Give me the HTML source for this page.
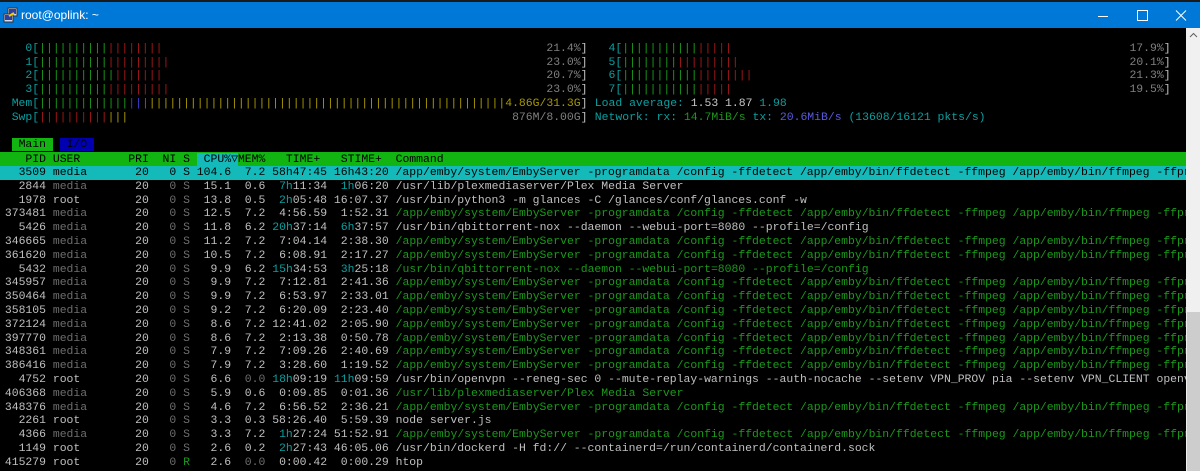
<!DOCTYPE html>
<html><head><meta charset="utf-8">
<style>
*{margin:0;padding:0}
body{width:1200px;height:471px;overflow:hidden;background:#0c0c0c;position:relative;font-family:"Liberation Mono",monospace;font-size:11.43px;color:#c0c0c0}
#top{position:absolute;left:0;top:0;width:1200px;height:2px;background:#1a1a1a}
#tb{position:absolute;left:0;top:2px;width:1200px;height:26px;background:#0078d7;color:#fff;font-family:"Liberation Sans",sans-serif;font-size:12px}
#tb .t{position:absolute;left:21px;top:6px}
#term{position:absolute;left:0;top:28px;width:1186px;height:443px;overflow:hidden;background:#000}
.l{position:absolute;left:-2px;height:13.8px;line-height:13.8px;white-space:pre}
.full{width:1188px}
.g{color:#1a9a1a}.r{color:#a51818}.c{color:#0aa0a0}.d{color:#6e6e6e}.y{color:#a89a00}.b{color:#3a3ad0}.p{color:#8a3ab0}.w{color:#c8c8c8}.gt{color:#808080}.bl{color:#5a5ae0}
.hdr{background:#12b412;color:#000}
.sel{background:#14baba;color:#000}
#sb{position:absolute;left:1186px;top:28px;width:14px;height:443px;background:#f0f0f0}
#th{position:absolute;left:1187px;top:312px;width:13px;height:159px;background:#cdcdcd}
</style></head><body>
<div id="top"></div>
<div id="tb">
<svg style="position:absolute;left:3px;top:5px" width="16" height="16" viewBox="0 0 16 16"><rect x="5" y="1" width="9" height="8" fill="#d8d8e8" stroke="#333"/><rect x="6" y="2" width="7" height="5" fill="#3040a0"/><rect x="1" y="7" width="9" height="8" fill="#d8d8e8" stroke="#333"/><rect x="2" y="8" width="7" height="5" fill="#3040a0"/><path d="M6 9l5-3" stroke="#f0d000" stroke-width="2"/></svg>
<span class="t">root@oplink: ~</span>
<svg style="position:absolute;left:1095px;top:7px" width="100" height="14" viewBox="0 0 100 14"><path d="M3 7.5h10" stroke="#fff"/><rect x="42.5" y="1.5" width="10" height="10" fill="none" stroke="#fff"/><path d="M81 1.5l10 10M91 1.5l-10 10" stroke="#fff"/></svg>
</div>
<div id="term">
<div class="l" style="left:11.7px;top:13.8px"><span class="c">  0[</span><span class="g">||||||||||</span><span class="r">||||||||</span>                                                        <span class="gt">21.4%</span>]</div>
<div class="l" style="left:11.7px;top:27.6px"><span class="c">  1[</span><span class="g">||||||||||</span><span class="r">|||||||||</span>                                                       <span class="gt">23.0%</span>]</div>
<div class="l" style="left:11.7px;top:41.4px"><span class="c">  2[</span><span class="g">|||||||||||</span><span class="r">|||||||</span>                                                        <span class="gt">20.7%</span>]</div>
<div class="l" style="left:11.7px;top:55.2px"><span class="c">  3[</span><span class="g">||||||||||</span><span class="r">|||||||||</span>                                                       <span class="gt">23.0%</span>]</div>
<div class="l" style="left:11.7px;top:69px"><span class="c">Mem[</span><span class="g">|||||||||||||</span><span class="b">||</span><span class="p">|</span><span class="y">||||||||||||||||||||||||||||||||||||||||||||||||||||4.86G/31.3G</span>]</div>
<div class="l" style="left:11.7px;top:82.8px"><span class="c">Swp[</span><span class="r">||||||||||</span><span class="y">|||</span>                                                        <span class="gt">876M/8.00G</span>]</div>
<div class="l" style="left:594.8px;top:69px"><span class="c">Load average: </span><span class="w">1.53 </span><span class="w">1.87 </span><span class="c">1.98</span></div>
<div class="l" style="left:594.8px;top:82.8px"><span class="c">Network: rx: </span><span class="g">14.7MiB/s</span><span class="c"> tx: </span><span class="bl">20.6MiB/s</span><span class="c"> (13608/16121 pkts/s)</span></div>
<div class="l" style="left:594.8px;top:13.8px"><span class="c">  4[</span><span class="g">|||||||||||</span><span class="r">|||||</span>                                                          <span class="gt">17.9%</span>]</div>
<div class="l" style="left:594.8px;top:27.6px"><span class="c">  5[</span><span class="g">||||||||</span><span class="r">|||||||||</span>                                                         <span class="gt">20.1%</span>]</div>
<div class="l" style="left:594.8px;top:41.4px"><span class="c">  6[</span><span class="g">|||||||||||</span><span class="r">||||||||</span>                                                       <span class="gt">21.3%</span>]</div>
<div class="l" style="left:594.8px;top:55.2px"><span class="c">  7[</span><span class="g">|||||||||||</span><span class="r">|||||</span>                                                          <span class="gt">19.5%</span>]</div>
<div class="l" style="top:110.4px">  <span style="background:#12b412;color:#000"> Main </span> <span style="background:#0000b0;color:#000"> I/O </span></div>
<div class="l full hdr" style="top:124.2px">    PID USER       PRI  NI S <span style="background:#14baba"> CPU%<span style="font-family:'DejaVu Sans Mono',monospace">▽</span></span>MEM%   TIME+   STIME+  Command</div>
<div class="l full sel" style="top:138px">   3509 media       20   0 S 104.6  7.2 58h47:45 16h43:20 /app/emby/system/EmbyServer -programdata /config -ffdetect /app/emby/bin/ffdetect -ffmpeg /app/emby/bin/ffmpeg -ffprobe</div>
<div class="l" style="top:151.8px">   2844 <span class="d">media</span>       20<span class="d">   0 S</span>  15.1  0.6  <span class="c">7h</span>11:34  <span class="c">1h</span>06:20 /usr/lib/plexmediaserver/Plex Media Server</div>
<div class="l" style="top:165.6px">   1978 root        20<span class="d">   0 S</span>  13.8  0.5  <span class="c">2h</span>05:48 16:07.37 /usr/bin/python3 -m glances -C /glances/conf/glances.conf -w</div>
<div class="l" style="top:179.4px"> 373481 <span class="d">media</span>       20<span class="d">   0 S</span>  12.5  7.2  4:56.59  1:52.31 <span class="g">/app/emby/system/EmbyServer -programdata /config -ffdetect /app/emby/bin/ffdetect -ffmpeg /app/emby/bin/ffmpeg -ffprobe</span></div>
<div class="l" style="top:193.2px">   5426 <span class="d">media</span>       20<span class="d">   0 S</span>  11.8  6.2 <span class="c">20h</span>37:14  <span class="c">6h</span>37:57 /usr/bin/qbittorrent-nox --daemon --webui-port=8080 --profile=/config</div>
<div class="l" style="top:207px"> 346665 <span class="d">media</span>       20<span class="d">   0 S</span>  11.2  7.2  7:04.14  2:38.30 <span class="g">/app/emby/system/EmbyServer -programdata /config -ffdetect /app/emby/bin/ffdetect -ffmpeg /app/emby/bin/ffmpeg -ffprobe</span></div>
<div class="l" style="top:220.8px"> 361620 <span class="d">media</span>       20<span class="d">   0 S</span>  10.5  7.2  6:08.91  2:17.27 <span class="g">/app/emby/system/EmbyServer -programdata /config -ffdetect /app/emby/bin/ffdetect -ffmpeg /app/emby/bin/ffmpeg -ffprobe</span></div>
<div class="l" style="top:234.6px">   5432 <span class="d">media</span>       20<span class="d">   0 S</span>   9.9  6.2 <span class="c">15h</span>34:53  <span class="c">3h</span>25:18 <span class="g">/usr/bin/qbittorrent-nox --daemon --webui-port=8080 --profile=/config</span></div>
<div class="l" style="top:248.4px"> 345957 <span class="d">media</span>       20<span class="d">   0 S</span>   9.9  7.2  7:12.81  2:41.36 <span class="g">/app/emby/system/EmbyServer -programdata /config -ffdetect /app/emby/bin/ffdetect -ffmpeg /app/emby/bin/ffmpeg -ffprobe</span></div>
<div class="l" style="top:262.2px"> 350464 <span class="d">media</span>       20<span class="d">   0 S</span>   9.9  7.2  6:53.97  2:33.01 <span class="g">/app/emby/system/EmbyServer -programdata /config -ffdetect /app/emby/bin/ffdetect -ffmpeg /app/emby/bin/ffmpeg -ffprobe</span></div>
<div class="l" style="top:276px"> 358105 <span class="d">media</span>       20<span class="d">   0 S</span>   9.2  7.2  6:20.09  2:23.40 <span class="g">/app/emby/system/EmbyServer -programdata /config -ffdetect /app/emby/bin/ffdetect -ffmpeg /app/emby/bin/ffmpeg -ffprobe</span></div>
<div class="l" style="top:289.8px"> 372124 <span class="d">media</span>       20<span class="d">   0 S</span>   8.6  7.2 12:41.02  2:05.90 <span class="g">/app/emby/system/EmbyServer -programdata /config -ffdetect /app/emby/bin/ffdetect -ffmpeg /app/emby/bin/ffmpeg -ffprobe</span></div>
<div class="l" style="top:303.6px"> 397770 <span class="d">media</span>       20<span class="d">   0 S</span>   8.6  7.2  2:13.38  0:50.78 <span class="g">/app/emby/system/EmbyServer -programdata /config -ffdetect /app/emby/bin/ffdetect -ffmpeg /app/emby/bin/ffmpeg -ffprobe</span></div>
<div class="l" style="top:317.4px"> 348361 <span class="d">media</span>       20<span class="d">   0 S</span>   7.9  7.2  7:09.26  2:40.69 <span class="g">/app/emby/system/EmbyServer -programdata /config -ffdetect /app/emby/bin/ffdetect -ffmpeg /app/emby/bin/ffmpeg -ffprobe</span></div>
<div class="l" style="top:331.2px"> 386416 <span class="d">media</span>       20<span class="d">   0 S</span>   7.9  7.2  3:28.60  1:19.52 <span class="g">/app/emby/system/EmbyServer -programdata /config -ffdetect /app/emby/bin/ffdetect -ffmpeg /app/emby/bin/ffmpeg -ffprobe</span></div>
<div class="l" style="top:345px">   4752 root        20<span class="d">   0 S</span>   6.6  <span class="d">0.0</span> <span class="c">18h</span>09:19 <span class="c">11h</span>09:59 /usr/bin/openvpn --reneg-sec 0 --mute-replay-warnings --auth-nocache --setenv VPN_PROV pia --setenv VPN_CLIENT openvpn</div>
<div class="l" style="top:358.8px"> 406368 <span class="d">media</span>       20<span class="d">   0 S</span>   5.9  0.6  0:09.85  0:01.36 <span class="g">/usr/lib/plexmediaserver/Plex Media Server</span></div>
<div class="l" style="top:372.6px"> 348376 <span class="d">media</span>       20<span class="d">   0 S</span>   4.6  7.2  6:56.52  2:36.21 <span class="g">/app/emby/system/EmbyServer -programdata /config -ffdetect /app/emby/bin/ffdetect -ffmpeg /app/emby/bin/ffmpeg -ffprobe</span></div>
<div class="l" style="top:386.4px">   2261 root        20<span class="d">   0 S</span>   3.3  0.3 58:26.40  5:59.39 node server.js</div>
<div class="l" style="top:400.2px">   4366 <span class="d">media</span>       20<span class="d">   0 S</span>   3.3  7.2  <span class="c">1h</span>27:24 51:52.91 <span class="g">/app/emby/system/EmbyServer -programdata /config -ffdetect /app/emby/bin/ffdetect -ffmpeg /app/emby/bin/ffmpeg -ffprobe</span></div>
<div class="l" style="top:414px">   1149 root        20<span class="d">   0 S</span>   2.6  0.2  <span class="c">2h</span>27:43 46:05.06 /usr/bin/dockerd -H fd:// --containerd=/run/containerd/containerd.sock</div>
<div class="l" style="top:427.8px"> 415279 root        20<span class="d">   0</span> <span class="g">R</span>   2.6  <span class="d">0.0</span>  0:00.42  0:00.29 htop</div>
</div>
<div id="sb"></div>
<div id="th"></div>
<svg style="position:absolute;left:1189px;top:32px" width="9" height="6" viewBox="0 0 9 6"><path d="M1 5l3.5-3.5L8 5" fill="none" stroke="#606060"/></svg>
</body></html>
